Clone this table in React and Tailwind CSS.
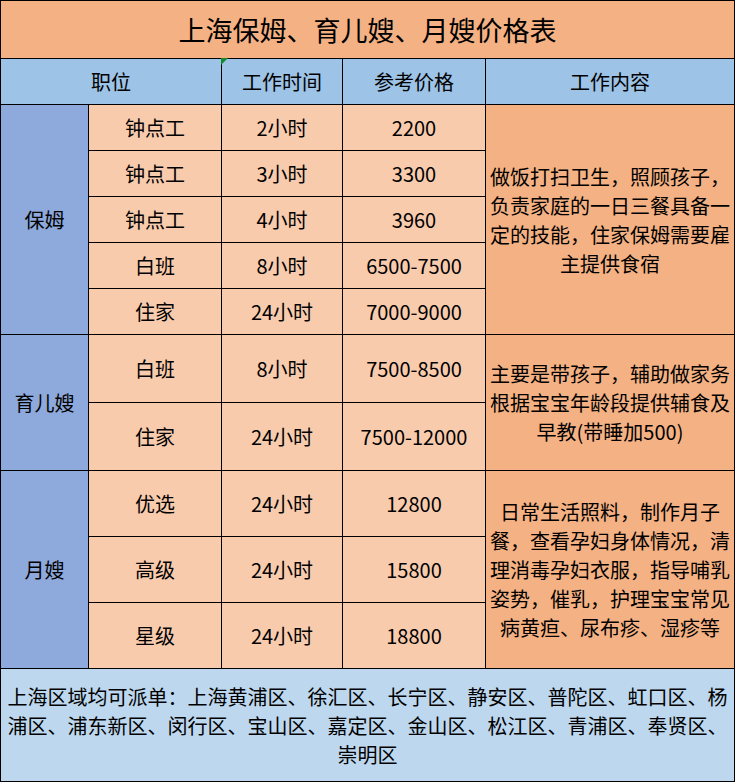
import React from "react";

const font = { fontFamily: '"Noto Sans CJK SC", "Noto Sans", sans-serif' };

function Cell({ className = "", children }) {
  return (
    <div className={`flex items-center justify-center text-center text-[20px] leading-[29px] text-black ${className}`}>
      {children}
    </div>
  );
}

function Lines({ lines }) {
  return (
    <div className="flex flex-col items-center">
      {lines.map((l, i) => (
        <span key={i} className="block whitespace-nowrap">{l}</span>
      ))}
    </div>
  );
}

const body = "bg-[#F8CBAD]";
const side = "bg-[#8EA9DB]";
const desc = "bg-[#F4B183]";

export default function App() {
  return (
    <div className="w-[735px] h-[782px] bg-white" style={font}>
      <div className="relative grid w-[735px] h-[782px] bg-black p-px gap-px grid-cols-[87px_132px_120px_142px_248px] grid-rows-[57px_45px_45px_45px_45px_45px_45px_67px_67px_65px_65px_65px_112px]">
        <Cell className="col-span-5 bg-[#F4B183] text-[27px]">上海保姆、育儿嫂、月嫂价格表</Cell>

        <Cell className="col-span-2 bg-[#9DC3E6]">职位</Cell>
        <Cell className="bg-[#9DC3E6]">工作时间</Cell>
        <Cell className="bg-[#9DC3E6]">参考价格</Cell>
        <Cell className="bg-[#9DC3E6]">工作内容</Cell>

        <Cell className={`row-span-5 ${side}`}>保姆</Cell>
        <Cell className={body}>钟点工</Cell>
        <Cell className={body}>2小时</Cell>
        <Cell className={body}>2200</Cell>
        <Cell className={`row-span-5 ${desc}`}>
          <Lines lines={["做饭打扫卫生，照顾孩子，", "负责家庭的一日三餐具备一", "定的技能，住家保姆需要雇", "主提供食宿"]} />
        </Cell>
        <Cell className={body}>钟点工</Cell>
        <Cell className={body}>3小时</Cell>
        <Cell className={body}>3300</Cell>
        <Cell className={body}>钟点工</Cell>
        <Cell className={body}>4小时</Cell>
        <Cell className={body}>3960</Cell>
        <Cell className={body}>白班</Cell>
        <Cell className={body}>8小时</Cell>
        <Cell className={body}>6500-7500</Cell>
        <Cell className={body}>住家</Cell>
        <Cell className={body}>24小时</Cell>
        <Cell className={body}>7000-9000</Cell>

        <Cell className={`row-span-2 ${side}`}>育儿嫂</Cell>
        <Cell className={body}>白班</Cell>
        <Cell className={body}>8小时</Cell>
        <Cell className={body}>7500-8500</Cell>
        <Cell className={`row-span-2 ${desc}`}>
          <Lines lines={["主要是带孩子，辅助做家务", "根据宝宝年龄段提供辅食及", "早教(带睡加500)"]} />
        </Cell>
        <Cell className={body}>住家</Cell>
        <Cell className={body}>24小时</Cell>
        <Cell className={body}>7500-12000</Cell>

        <Cell className={`row-span-3 ${side}`}>月嫂</Cell>
        <Cell className={body}>优选</Cell>
        <Cell className={body}>24小时</Cell>
        <Cell className={body}>12800</Cell>
        <Cell className={`row-span-3 ${desc}`}>
          <Lines lines={["日常生活照料，制作月子", "餐，查看孕妇身体情况，清", "理消毒孕妇衣服，指导哺乳", "姿势，催乳，护理宝宝常见", "病黄疸、尿布疹、湿疹等"]} />
        </Cell>
        <Cell className={body}>高级</Cell>
        <Cell className={body}>24小时</Cell>
        <Cell className={body}>15800</Cell>
        <Cell className={body}>星级</Cell>
        <Cell className={body}>24小时</Cell>
        <Cell className={body}>18800</Cell>

        <Cell className="col-span-5 bg-[#BDD7EE]">
          <Lines lines={["上海区域均可派单：上海黄浦区、徐汇区、长宁区、静安区、普陀区、虹口区、杨", "浦区、浦东新区、闵行区、宝山区、嘉定区、金山区、松江区、青浦区、奉贤区、", "崇明区"]} />
        </Cell>

        <svg className="absolute left-[221px] top-[58px]" width="7" height="7" viewBox="0 0 7 7">
          <polygon points="0,0 7,0 0,7" fill="#138A2C" />
        </svg>
      </div>
    </div>
  );
}
